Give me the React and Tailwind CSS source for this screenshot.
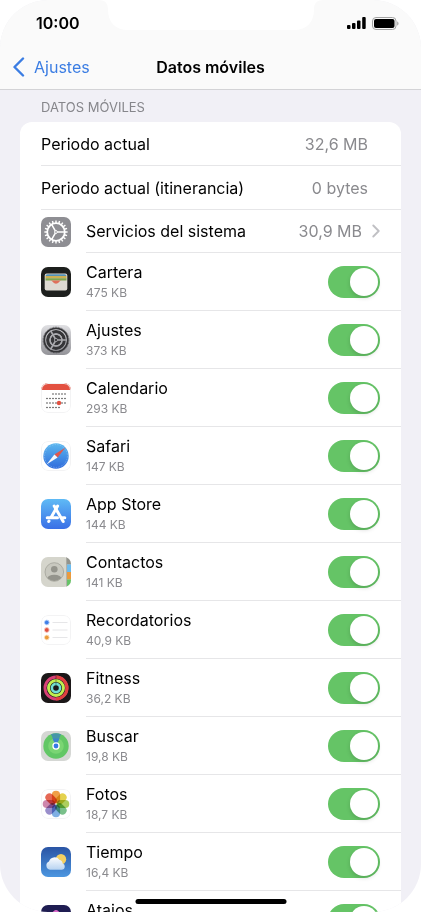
import React from "react";

const PETALS = [
  ["#ef9a3d", 0],
  ["#e3d045", 45],
  ["#a9cb55", 90],
  ["#72bd84", 135],
  ["#78abe2", 180],
  ["#9488c8", 225],
  ["#cb80a8", 270],
  ["#e4604c", 315],
];

const TEETH = Array.from({ length: 20 }, (_, i) => i * 18);

function Tile({ children, edge }) {
  return (
    <svg viewBox="0 0 30 30" className="size-[30px] shrink-0 rounded-[7px]" aria-hidden="true">
      {children}
      {edge && <rect x="0.5" y="0.5" width="29" height="29" rx="6.5" fill="none" stroke="#f3f3f4" />}
    </svg>
  );
}

function SystemIcon() {
  return (
    <Tile>
      <rect width="30" height="30" fill="#8e8e93" />
      <g stroke="#fff" fill="none">
        <circle cx="15" cy="15" r="8.8" strokeWidth="1.8" />
        {TEETH.map((a) => (
          <path key={a} d="M15 6V3.4" strokeWidth="1.4" transform={`rotate(${a} 15 15)`} />
        ))}
        <circle cx="15" cy="15" r="1.4" strokeWidth="1" />
        <path d="M16.4 15H23.8M14.3 13.8L10.6 7.4M14.3 16.2L10.6 22.6" strokeWidth="1.5" />
      </g>
    </Tile>
  );
}

function WalletIcon() {
  return (
    <Tile>
      <rect width="30" height="30" fill="#1d1f1d" />
      <rect x="3.7" y="6.5" width="22.600" height="17" rx="2" fill="#dedad2" />
      <path d="M4.5 9a2 2 0 0 1 2-1.800h17a2 2 0 0 1 2 1.800z" fill="#5493b8" />
      <path d="M4.500 9h21v2.300h-21z" fill="#cdb052" />
      <path d="M4.500 11.300h21v2.200h-21z" fill="#7fa650" />
      <path d="M9.500 13.500h11c-1.500.3-2 .9-2.600 1.700-1.300 1.900-4.500 1.900-5.800 0-.6-.8-1.100-1.400-2.600-1.700z" fill="#e0705b" />
    </Tile>
  );
}

function SettingsIcon() {
  return (
    <Tile>
      <defs>
        <linearGradient id="settings" x2="0" y2="1">
          <stop stopColor="#e0e0e3" />
          <stop offset="1" stopColor="#939398" />
        </linearGradient>
      </defs>
      <rect width="30" height="30" fill="url(#settings)" />
      <g fill="none" stroke="#353538">
        <circle cx="15" cy="15" r="11.700" strokeWidth="1.800" />
        <circle cx="15" cy="15" r="12.900" strokeWidth="0.700" strokeDasharray="0.800 0.800" />
        <circle cx="15" cy="15" r="8.300" strokeWidth="3.200" />
      </g>
      <circle cx="15" cy="15" r="5.300" fill="#353538" />
      <g fill="none" stroke="#a9a9ad">
        <path d="M15 15H26M15 15L9.500 5.500M15 15L9.500 24.500" strokeWidth="1.600" />
        <circle cx="15" cy="15" r="6" strokeWidth="1.200" />
      </g>
      <circle cx="15" cy="15" r="1.600" fill="#353538" stroke="#a9a9ad" strokeWidth="0.800" />
    </Tile>
  );
}

function CalendarIcon() {
  const rows = [
    [12, 11, 5],
    [6, 15.500, 7],
    [6, 20, 7],
    [6, 24.500, 5],
  ];
  return (
    <Tile edge>
      <rect width="30" height="30" fill="#fff" />
      {rows.map(([x, y, n]) =>
        Array.from({ length: n }, (_, i) => (
          <circle key={`${y}-${i}`} cx={x + i * 3} cy={y} r="0.700" fill="#222" />
        )),
      )}
      <circle cx="18" cy="20" r="2.200" fill="#e35141" />
      <path d="M0 0h30v7H0z" fill="#e35141" />
    </Tile>
  );
}

function SafariIcon() {
  return (
    <Tile edge>
      <defs>
        <linearGradient id="safari" x2="0" y2="1">
          <stop stopColor="#5cb8ef" />
          <stop offset="1" stopColor="#2f6bdc" />
        </linearGradient>
      </defs>
      <rect width="30" height="30" fill="#fff" />
      <circle cx="15" cy="15" r="12.700" fill="url(#safari)" />
      <circle cx="15" cy="15" r="11.400" fill="none" stroke="#b9dafa" strokeWidth="0.800" strokeDasharray="0.500 1.200" />
      <path d="M24.500 6.500L16.600 16.600L13.400 13.400z" fill="#e0574d" />
      <path d="M5.500 23.500L13.400 13.400L16.600 16.600z" fill="#f6f8fb" />
    </Tile>
  );
}

function AppStoreIcon() {
  return (
    <Tile>
      <defs>
        <linearGradient id="store" x2="0" y2="1">
          <stop stopColor="#5fbaf5" />
          <stop offset="1" stopColor="#3a6fe6" />
        </linearGradient>
      </defs>
      <rect width="30" height="30" fill="url(#store)" />
      <g stroke="#fff" strokeWidth="3" strokeLinecap="round" fill="none">
        <path d="M16.600 7L10.200 18.200M8 22L7.700 22.500" />
        <path d="M13.200 7L22.200 22.500" />
        <path d="M6.200 18.700H16.500M21.500 18.700H23.800" />
      </g>
    </Tile>
  );
}

function ContactsIcon() {
  return (
    <Tile>
      <defs>
        <clipPath id="face">
          <circle cx="13.300" cy="15" r="9" />
        </clipPath>
      </defs>
      <rect width="30" height="30" fill="#d5d5cc" />
      <path d="M25.500 0H30v7.500h-4.500z" fill="#92938c" />
      <path d="M26 7.500h4V15h-4z" fill="#6cbcf0" />
      <path d="M26 15h4v7.500h-4z" fill="#ec9a3c" />
      <path d="M26 22.500h4V30h-4z" fill="#65c466" />
      <path d="M25.600 0V30" stroke="#a5a69e" strokeWidth="0.800" />
      <circle cx="13.300" cy="15" r="9.300" fill="#c8c8bf" stroke="#a3a39b" strokeWidth="0.800" />
      <g clipPath="url(#face)" fill="#94948c">
        <circle cx="13.300" cy="12.300" r="3.300" />
        <ellipse cx="13.300" cy="22.300" rx="7.500" ry="4.500" />
      </g>
    </Tile>
  );
}

function RemindersIcon() {
  const dots = [
    ["#3f7fe8", "#bfd6fa", 7.500],
    ["#e0503f", "#f6c8c3", 15],
    ["#eb9a38", "#fae0bf", 22.500],
  ];
  return (
    <Tile edge>
      <rect width="30" height="30" fill="#fff" />
      {dots.map(([fill, ring, y]) => (
        <g key={y}>
          <circle cx="5.800" cy={y} r="2.400" fill={fill} stroke={ring} strokeWidth="0.900" />
          <path d={`M11.500 ${y}H26.500`} stroke="#e6e6e8" strokeWidth="1" />
        </g>
      ))}
    </Tile>
  );
}

function FitnessIcon() {
  return (
    <Tile>
      <rect width="30" height="30" fill="#1b1718" />
      <g fill="none">
        <circle cx="15" cy="15" r="11" stroke="#d83f76" strokeWidth="2.900" />
        <path d="M15 4a11 11 0 0 1 0 22" stroke="#e0413f" strokeWidth="2.900" />
        <circle cx="15" cy="15" r="7.500" stroke="#c0ee50" strokeWidth="2.900" />
        <circle cx="15" cy="15" r="4.100" stroke="#72e0d4" strokeWidth="2.600" />
        <path d="M15 2.600v3M15 6v3M15 9.600v2.600" stroke="#1b1718" strokeWidth="0.700" strokeOpacity="0.600" />
      </g>
    </Tile>
  );
}

function FindIcon() {
  return (
    <Tile>
      <rect width="30" height="30" fill="#d5d7d4" />
      <circle cx="15" cy="15" r="12.700" fill="#62c765" />
      <circle cx="15" cy="15" r="7.800" fill="#7ad573" />
      <path d="M15 15L10 3.300a12.700 12.700 0 0 1 10 0z" fill="#4596a8" />
      <path d="M15 15L11.500 7.500h7z" fill="#3c84cf" />
      <circle cx="15" cy="15" r="3.700" fill="#fff" />
      <circle cx="15" cy="15" r="2.400" fill="#3679e6" />
    </Tile>
  );
}

function PhotosIcon() {
  return (
    <Tile edge>
      <rect width="30" height="30" fill="#fff" />
      {PETALS.map(([fill, a]) => (
        <rect
          key={a}
          x="10.900"
          y="1.700"
          width="8.200"
          height="12.600"
          rx="4.100"
          fill={fill}
          fillOpacity="0.950"
          transform={`rotate(${a} 15 15)`}
          className="mix-blend-multiply"
        />
      ))}
    </Tile>
  );
}

function WeatherIcon() {
  return (
    <Tile>
      <defs>
        <linearGradient id="sky" x2="0" y2="1">
          <stop stopColor="#2a54a4" />
          <stop offset="1" stopColor="#4c96e0" />
        </linearGradient>
        <linearGradient id="cloud" x2="0" y2="1">
          <stop stopColor="#fbfcfe" />
          <stop offset="1" stopColor="#b7d3f1" />
        </linearGradient>
      </defs>
      <rect width="30" height="30" fill="url(#sky)" />
      <circle cx="20" cy="12.200" r="5.200" fill="#f3cf62" />
      <path d="M9 22.800a4.300 4.300 0 0 1-1-8.200 5.800 5.800 0 0 1 10.300-1.800 4.400 4.400 0 0 1 3.400 3.800 3.200 3.200 0 0 1-.7 6.200z" fill="url(#cloud)" />
    </Tile>
  );
}

function ShortcutsIcon() {
  return (
    <Tile>
      <rect width="30" height="30" fill="#1f1d52" />
      <rect x="9.500" y="6" width="11" height="11" rx="3.500" fill="#d868c8" transform="rotate(45 15 11.500)" />
      <rect x="9.500" y="13" width="11" height="11" rx="3.500" fill="#4fb4e6" fillOpacity="0.800" transform="rotate(45 15 18.500)" />
    </Tile>
  );
}

const APPS = [
  { name: "Cartera", usage: "475 KB", Icon: WalletIcon },
  { name: "Ajustes", usage: "373 KB", Icon: SettingsIcon },
  { name: "Calendario", usage: "293 KB", Icon: CalendarIcon },
  { name: "Safari", usage: "147 KB", Icon: SafariIcon },
  { name: "App Store", usage: "144 KB", Icon: AppStoreIcon },
  { name: "Contactos", usage: "141 KB", Icon: ContactsIcon },
  { name: "Recordatorios", usage: "40,9 KB", Icon: RemindersIcon },
  { name: "Fitness", usage: "36,2 KB", Icon: FitnessIcon },
  { name: "Buscar", usage: "19,8 KB", Icon: FindIcon },
  { name: "Fotos", usage: "18,7 KB", Icon: PhotosIcon },
  { name: "Tiempo", usage: "16,4 KB", Icon: WeatherIcon },
  { name: "Atajos", Icon: ShortcutsIcon },
];

function StatusBar() {
  return (
    <div className="flex h-[46px] items-center justify-between pr-[22px] pl-9">
      <span className="text-base font-semibold">10:00</span>
      <div className="flex items-center gap-1.5">
        <svg viewBox="0 0 19 12" className="h-3 w-[19px]" aria-hidden="true">
          <rect x="0" y="8" width="3.500" height="4" rx="1" />
          <rect x="5" y="6" width="3.500" height="6" rx="1" />
          <rect x="10" y="3.500" width="3.500" height="8.500" rx="1" />
          <rect x="15.200" y="0" width="3.500" height="12" rx="1" />
        </svg>
        <svg viewBox="0 0 27 13" className="h-[13px] w-[27px]" aria-hidden="true">
          <rect x="0.500" y="0.500" width="23.500" height="12" rx="3.500" fill="none" stroke="#a3a3a3" />
          <rect x="2" y="2" width="20.500" height="9" rx="2" />
          <path d="M25.200 4.500v4c.8-.3 1.300-1.100 1.300-2s-.5-1.700-1.300-2z" fill="#a3a3a3" />
        </svg>
      </div>
    </div>
  );
}

function AppRow({ name, usage, Icon, last }) {
  return (
    <li className="flex h-[58px] gap-[15px] pl-[21px]">
      <div className="flex items-center">
        <Icon />
      </div>
      <label className={`flex flex-1 items-start justify-between pt-2 pr-[21px] ${last ? "" : "border-b border-[#e6e6e8]"}`}>
        <span className="flex flex-col">
          <span className="text-base leading-[22px]">{name}</span>
          {usage && <span className="text-xs leading-5 text-[#8a8a8e]">{usage}</span>}
        </span>
        <input
          type="checkbox"
          role="switch"
          defaultChecked
          className="mt-[5px] h-8 w-[52px] appearance-none rounded-full bg-[#e9e9ea] p-0.5 before:block before:size-7 before:rounded-full before:bg-white before:shadow-[0_2px_4px_rgba(0,0,0,0.15)] checked:bg-[#65c466] checked:before:ml-auto"
        />
      </label>
    </li>
  );
}

export default function App() {
  return (
    <div className="relative h-screen overflow-hidden rounded-[48px] bg-[#f1f0f6] font-['Inter','Liberation_Sans',sans-serif] text-black">
      <svg viewBox="0 0 226 30" className="absolute top-0 left-1/2 h-[30px] w-[226px] -translate-x-1/2" aria-hidden="true">
        <path d="M0 0C7 0 10 3 10 9.500C10 22 17 30 30 30H196C209 30 216 22 216 9.500C216 3 219 0 226 0z" fill="#fff" />
      </svg>
      <header className="border-b border-[#d3d3d6] bg-[#fafafa]">
        <StatusBar />
        <nav className="grid h-[43px] grid-cols-[1fr_auto_1fr] items-center px-3 pb-0.5">
          <a href="#ajustes" className="flex items-center gap-[9px] text-base text-[#3b7de3]">
            <svg viewBox="0 0 13 20" className="h-5 w-[13px]" fill="none" stroke="currentColor" strokeWidth="2.400" strokeLinecap="round" strokeLinejoin="round" aria-hidden="true">
              <path d="M11 1.500L2.500 10L11 18.500" />
            </svg>
            Ajustes
          </a>
          <h1 className="text-base font-semibold">Datos móviles</h1>
        </nav>
      </header>
      <main className="px-5">
        <h2 className="px-[21px] pt-[7px] pb-[5px] text-[13px] leading-5 text-[#86868b]">DATOS MÓVILES</h2>
        <section className="rounded-xl bg-white">
          <dl className="pl-[21px] text-base">
            <div className="flex h-11 items-center justify-between border-b border-[#e6e6e8] pr-[33px]">
              <dt>Periodo actual</dt>
              <dd className="text-[#8a8a8e]">32,6 MB</dd>
            </div>
            <div className="flex h-11 items-center justify-between border-b border-[#e6e6e8] pr-[33px]">
              <dt>Periodo actual (itinerancia)</dt>
              <dd className="text-[#8a8a8e]">0 bytes</dd>
            </div>
          </dl>
          <a href="#servicios" className="flex h-[43px] gap-[15px] pl-[21px] text-base">
            <span className="flex items-center">
              <SystemIcon />
            </span>
            <span className="flex flex-1 items-center border-b border-[#e6e6e8] pr-[21px]">
              <span className="flex-1">Servicios del sistema</span>
              <span className="text-[#8a8a8e]">30,9 MB</span>
              <svg viewBox="0 0 8 14" className="ml-2.5 h-3.5 w-2" fill="none" stroke="#c0c0c4" strokeWidth="1.900" strokeLinecap="round" strokeLinejoin="round" aria-hidden="true">
                <path d="M1.300 1.500L6.700 7L1.300 12.500" />
              </svg>
            </span>
          </a>
          <ul>
            {APPS.map((app, i) => (
              <AppRow key={app.name} {...app} last={i === APPS.length - 1} />
            ))}
          </ul>
        </section>
      </main>
      <div className="absolute bottom-2 left-1/2 h-[5px] w-[151px] -translate-x-1/2 rounded-full bg-black" />
    </div>
  );
}
